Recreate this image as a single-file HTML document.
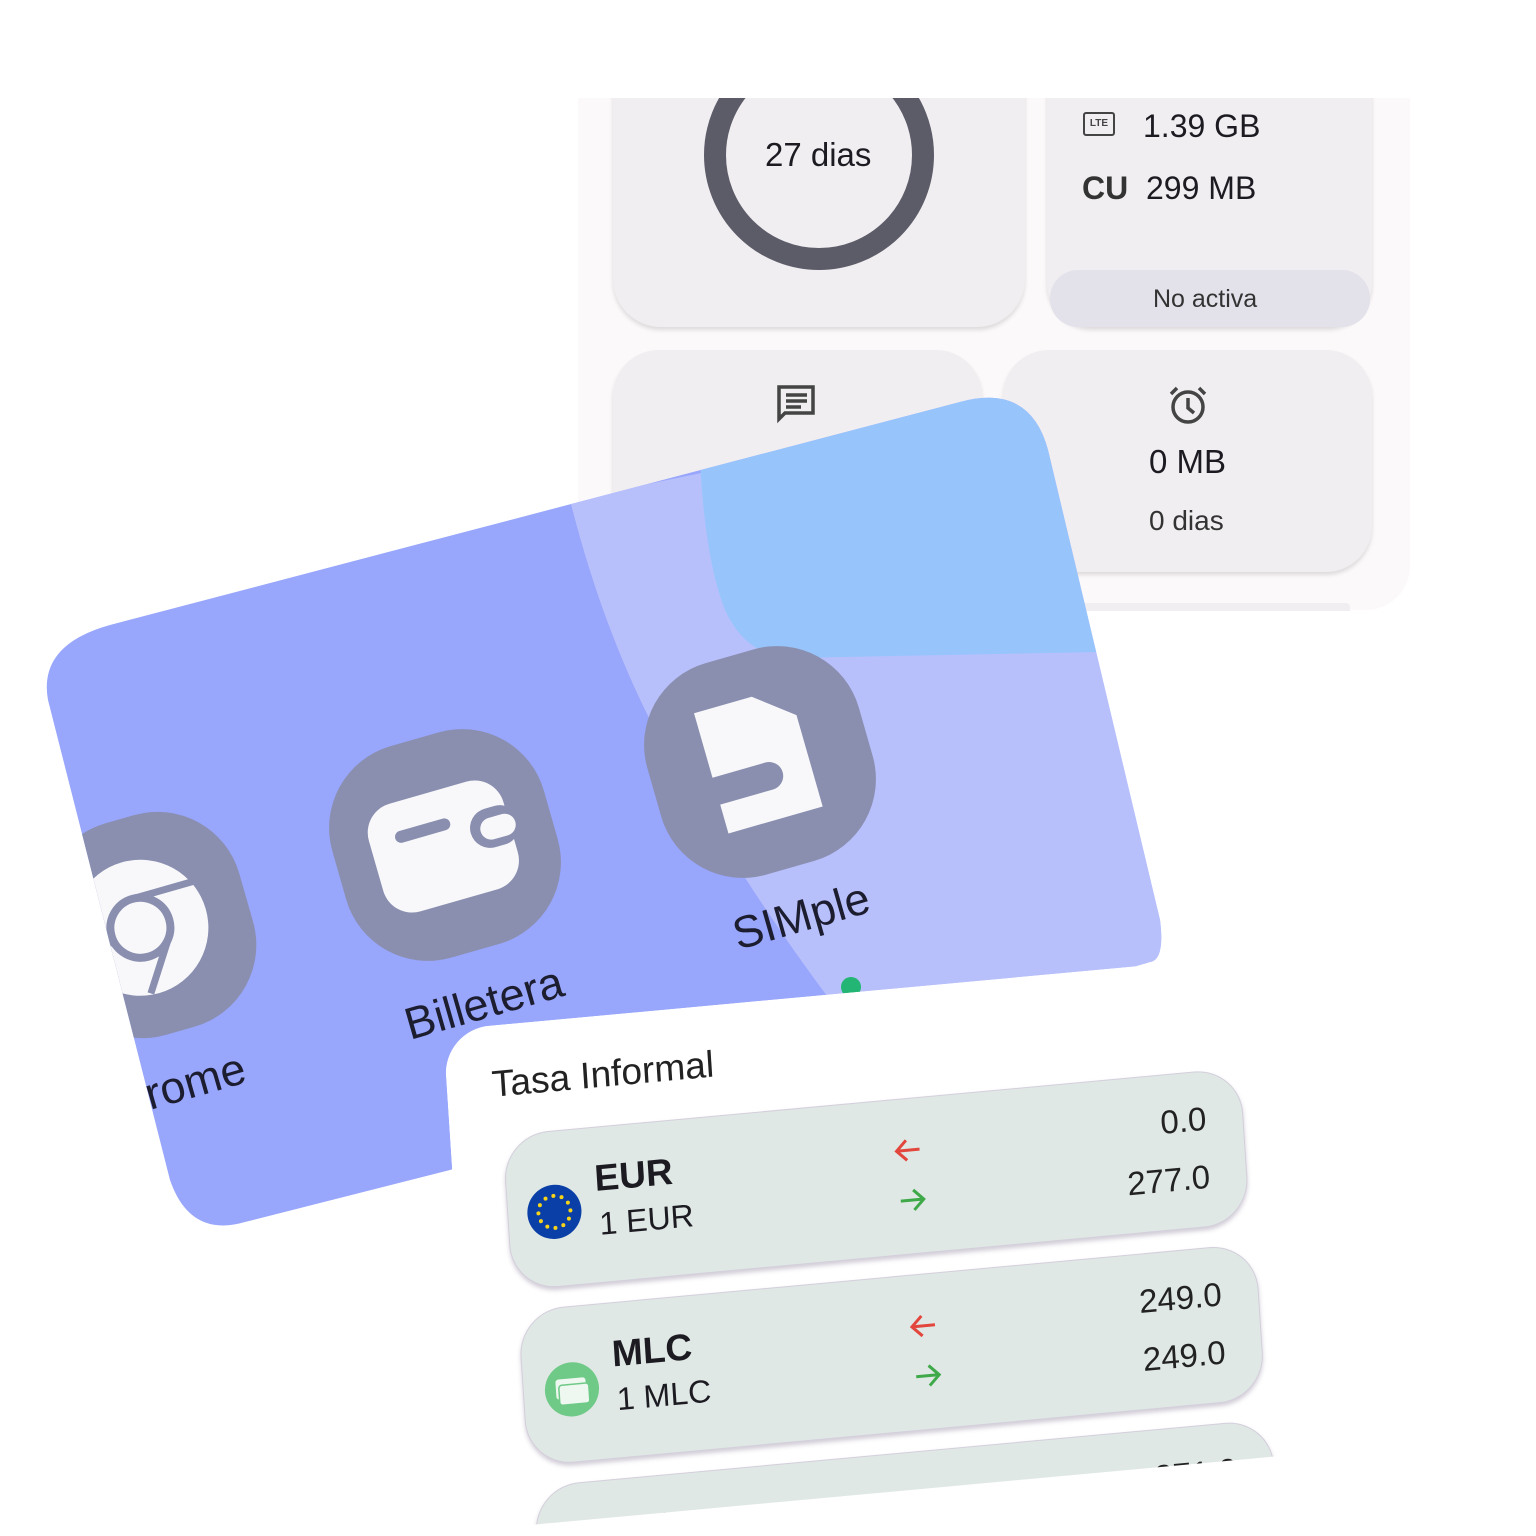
<!DOCTYPE html>
<html><head><meta charset="utf-8"><style>
*{margin:0;padding:0;box-sizing:border-box}
html,body{width:1536px;height:1536px;overflow:hidden}
body{background:#fff;position:relative;font-family:"Liberation Sans","DejaVu Sans",sans-serif;color:#1d1b22}
.abs{position:absolute}
.card{position:absolute;background:#f1eef1;border-radius:46px;box-shadow:0 3px 4px rgba(0,0,0,.12)}
.t{position:absolute;white-space:nowrap}
.row{position:absolute;width:738px;height:156px;background:#dfe8e4;border-radius:46px;box-shadow:0 3px 4px rgba(80,60,100,.25);border:1.5px solid #d4cfdc}
.val{position:absolute;right:36px;font-size:33px;color:#222}
</style></head><body>

<!-- top panel -->
<div class="abs" style="left:578px;top:98px;width:832px;height:512px;background:#fcf9fa;border-radius:0 0 44px 44px"></div>
<div class="card" style="left:613px;top:60px;width:412px;height:267px;border-radius:0 0 48px 48px"></div>
<svg class="abs" style="left:690px;top:30px" width="260" height="250"><circle cx="129" cy="125" r="104" fill="none" stroke="#5c5b68" stroke-width="22"/></svg>
<div class="t" style="left:765px;top:136px;font-size:33px">27 dias</div>
<div class="card" style="left:1047px;top:60px;width:325px;height:267px;border-radius:0 0 44px 44px"></div>
<div class="abs" style="left:1050px;top:270px;width:320px;height:57px;background:#e3e1ea;border-radius:28px"></div>
<div class="t" style="left:1153px;top:285px;font-size:25px;color:#333">No activa</div>
<div class="abs" style="left:1083px;top:112px;width:32px;height:24px;border:2.5px solid #444;border-radius:3px;font-size:10px;font-weight:bold;line-height:19px;text-align:center;color:#444">LTE</div>
<div class="t" style="left:1143px;top:108px;font-size:32px">1.39 GB</div>
<div class="t" style="left:1082px;top:170px;font-size:32px;font-weight:bold;color:#333">CU</div>
<div class="t" style="left:1146px;top:170px;font-size:32px">299 MB</div>
<div class="card" style="left:613px;top:350px;width:369px;height:230px"></div>
<div class="card" style="left:1003px;top:350px;width:369px;height:222px"></div>
<div class="abs" style="left:1070px;top:603px;width:280px;height:8px;background:#f1eef1;border-radius:4px 4px 0 0"></div>
<svg class="abs" style="left:776px;top:384px" width="42" height="40"><path d="M3 3h34v26H9l-6 6z" fill="none" stroke="#444" stroke-width="3.5"/><path d="M10 11h21M10 17h21M10 23h15" stroke="#444" stroke-width="3.5"/></svg>
<svg class="abs" style="left:1166px;top:384px" width="44" height="44"><circle cx="22" cy="23" r="15" fill="none" stroke="#444" stroke-width="3.5"/><path d="M22 14v10l6 5M5 10l6-6M39 10l-6-6" fill="none" stroke="#444" stroke-width="3.5"/></svg>
<div class="t" style="left:1149px;top:443px;font-size:33px">0 MB</div>
<div class="t" style="left:1149px;top:505px;font-size:28px;color:#333">0 dias</div>
<div class="abs" style="left:560px;top:0;width:880px;height:98px;background:#fff"></div>

<!-- blue card -->
<svg class="abs" style="left:0;top:0" width="1536" height="1536">
<defs><clipPath id="bc"><path d="M48 700 Q38 645 110 625 L960 402 Q1030 383 1048 450 L1160 920 Q1165 960 1150 962 L450 1170 L245 1222 Q190 1238 170 1180 Z"/></clipPath></defs>
<g clip-path="url(#bc)">
<rect width="1536" height="1536" fill="#98a6fc"/>
<path d="M570 500 Q600 620 650 720 Q740 880 830 1000 L1300 1000 L1300 350 Z" fill="#b8c0fc"/>
<path d="M700 460 Q705 560 725 610 Q745 655 790 658 L1100 652 L1100 350 Z" fill="#98c4fc"/>
<g transform="translate(445,845) rotate(-16)"><rect x="-110" y="-110" width="220" height="220" rx="85" fill="#8a8fb0"/><rect x="-72" y="-55" width="140" height="112" rx="30" fill="#f8f8fa"/><path d="M-40 -20h45" stroke="#8a8fb0" stroke-width="12" stroke-linecap="round"/><rect x="28" y="-24" width="50" height="40" rx="20" fill="#8a8fb0"/><rect x="38" y="-14" width="36" height="22" rx="11" fill="#f8f8fa"/></g>
<g transform="translate(760,762) rotate(-16)"><rect x="-110" y="-110" width="220" height="220" rx="85" fill="#8a8fb0"/><path d="M-50 -65h60l38 30v95h-98v-30h55a14 14 0 0 0 0-28h-55z" fill="#f8f8fa"/></g>
<g transform="translate(150,925) rotate(-16)"><rect x="-100" y="-110" width="200" height="220" rx="85" fill="#8a8fb0"/><circle cx="-10" cy="0" r="68" fill="#f8f8fa"/><circle cx="-10" cy="0" r="30" fill="none" stroke="#8a8fb0" stroke-width="8"/><path d="M-10 -30 L60 -30 M16 15 L-18 66 M-36 15 L-70 -44" stroke="#8a8fb0" stroke-width="7"/></g>
<text x="0" y="0" transform="translate(410,1040) rotate(-16)" font-size="45" fill="#1d1d30" font-family="Liberation Sans,sans-serif">Billetera</text>
<text x="0" y="0" transform="translate(738,950) rotate(-16)" font-size="45" fill="#1d1d30" font-family="Liberation Sans,sans-serif">SIMple</text>
<text x="0" y="0" transform="translate(150,1110) rotate(-16)" font-size="45" fill="#1d1d30" font-family="Liberation Sans,sans-serif">rome</text>
</g>
<circle cx="851" cy="987" r="10" fill="#22b573"/>
</svg>

<!-- bottom panel -->
<div class="abs" style="left:443px;top:1030px;width:900px;height:500px;overflow:hidden;transform-origin:0 0;transform:matrix(1,-0.092,0.065,1,0,0)">
<div class="abs" style="left:0;top:0;width:900px;height:500px;background:#fff;border-radius:46px 0 0 0"></div>
<div class="abs" style="left:0;top:30px;width:900px;height:470px">
<div class="t" style="left:45px;top:8px;font-size:37px;color:#222">Tasa Informal</div>
<div class="row" style="left:52px;top:80px">
 <svg class="abs" style="left:18px;top:52px" width="56" height="56"><circle cx="28" cy="28" r="27" fill="#0b3fa8"/><g fill="#f7d418"><circle cx="28" cy="12" r="2"/><circle cx="28" cy="44" r="2"/><circle cx="12" cy="28" r="2"/><circle cx="44" cy="28" r="2"/><circle cx="20" cy="14" r="2"/><circle cx="36" cy="14" r="2"/><circle cx="20" cy="42" r="2"/><circle cx="36" cy="42" r="2"/><circle cx="14" cy="20" r="2"/><circle cx="42" cy="20" r="2"/><circle cx="14" cy="36" r="2"/><circle cx="42" cy="36" r="2"/></g></svg>
 <div class="t" style="left:88px;top:30px;font-size:37px;font-weight:bold">EUR</div>
 <div class="t" style="left:90px;top:78px;font-size:32px">1 EUR</div>
 <svg class="abs" style="left:386px;top:38px" width="30" height="26"><path d="M27 13H4M14 3L4 13l10 10" fill="none" stroke="#e2463c" stroke-width="3"/></svg>
 <svg class="abs" style="left:388px;top:88px" width="30" height="26"><path d="M3 13h23M16 3l10 10-10 10" fill="none" stroke="#3fa94a" stroke-width="3"/></svg>
 <div class="val" style="top:28px">0.0</div>
 <div class="val" style="top:86px">277.0</div>
</div>
<div class="row" style="left:56px;top:256px">
 <svg class="abs" style="left:20px;top:54px" width="56" height="56"><circle cx="28" cy="28" r="27" fill="#6fc987"/><rect x="12" y="17" width="30" height="20" rx="3" fill="#eef8f0"/><rect x="15" y="23" width="30" height="20" rx="3" fill="#eef8f0" stroke="#6fc987" stroke-width="1.5"/></svg>
 <div class="t" style="left:90px;top:30px;font-size:37px;font-weight:bold">MLC</div>
 <div class="t" style="left:92px;top:78px;font-size:32px">1 MLC</div>
 <svg class="abs" style="left:386px;top:38px" width="30" height="26"><path d="M27 13H4M14 3L4 13l10 10" fill="none" stroke="#e2463c" stroke-width="3"/></svg>
 <svg class="abs" style="left:388px;top:88px" width="30" height="26"><path d="M3 13h23M16 3l10 10-10 10" fill="none" stroke="#3fa94a" stroke-width="3"/></svg>
 <div class="val" style="top:28px">249.0</div>
 <div class="val" style="top:86px">249.0</div>
</div>
<div class="row" style="left:60px;top:432px">
 <div class="t" style="left:90px;top:30px;font-size:37px;font-weight:bold">USD</div>
 <svg class="abs" style="left:386px;top:38px" width="30" height="26"><path d="M27 13H4M14 3L4 13l10 10" fill="none" stroke="#e2463c" stroke-width="3"/></svg>
 <div class="val" style="top:28px">271.0</div>
</div>
</div>
</div>
<svg class="abs" style="left:0;top:0" width="1536" height="1536"><path d="M400 1536 L530 1530 L1275 1457 L1536 1440 L1536 1536 Z" fill="#fff"/></svg>
</body></html>
